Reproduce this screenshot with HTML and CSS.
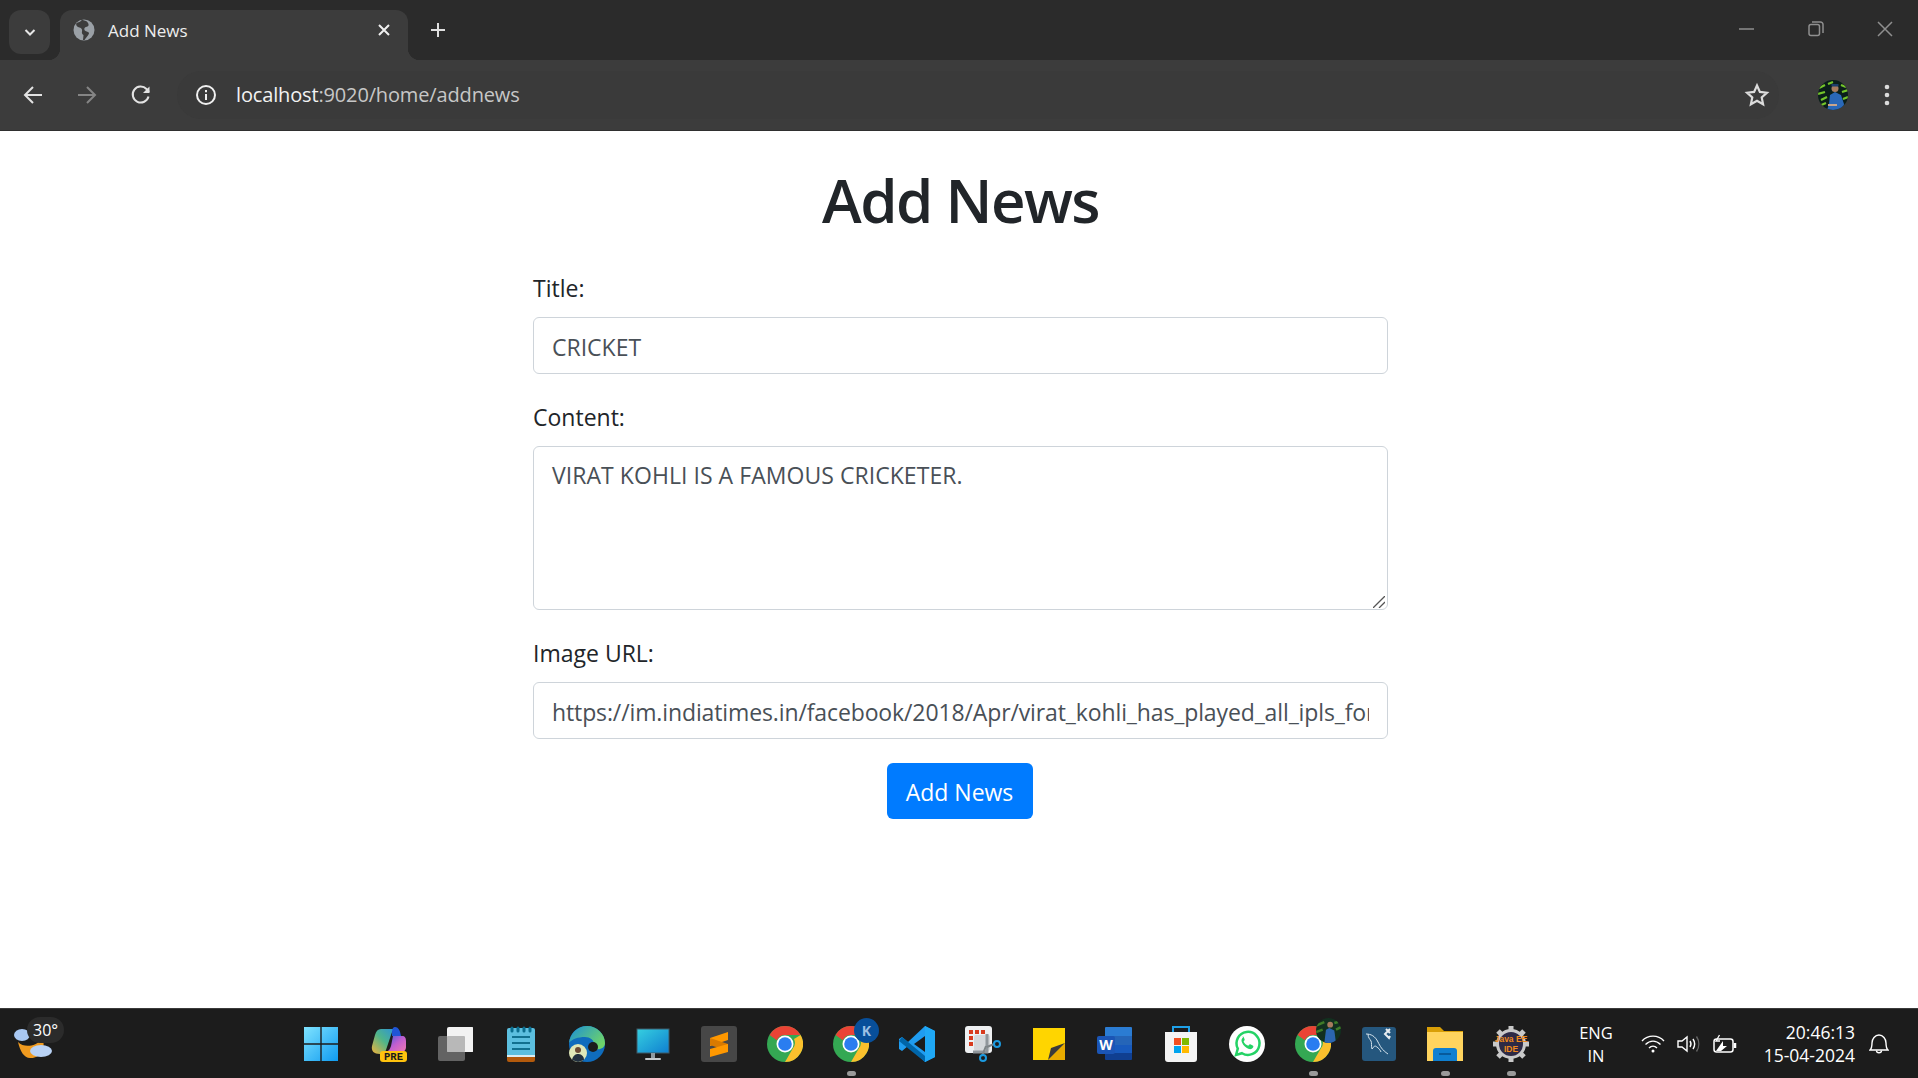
FILE: index.html
```html
<!DOCTYPE html>
<html lang="en">
<head>
  <meta charset="UTF-8">
  <title>Add News</title>
  <link rel="stylesheet" href="styles.css">
</head>
<body>
  <!-- browser tab strip -->
  <div class="tabstrip">
    <div class="tabsearch">
      <svg width="14" height="14" viewBox="0 0 14 14"><path d="M2.5 5l4.5 4.5L11.500 5" fill="none" stroke="#e6e6e6" stroke-width="2"/></svg>
    </div>
    <div class="tab">
      <svg class="globe" width="22" height="22" viewBox="0 0 22 22">
        <circle cx="11" cy="11" r="10.500" fill="#9aa0a6"/>
        <path d="M9 .8C8 3 5 3.500 3.500 4 2.500 6 4 8 6.500 8.500 8.500 9 9.500 10.500 9 12.500c-.5 1.500.5 3 1.500 3.500l-.5 5h1.500c1-2 4-4.500 4.500-6.500.3-1.500-2-2-3.500-2.500-1.500-.7-1.500-2.500-.5-3.500 1-.8 3-.5 3.500-2 .3-1.500-.5-3-2-4.200z" fill="#3c3c3c"/>
      </svg>
      <span class="tab-title">Add News</span>
      <svg class="tab-close" width="14" height="14" viewBox="0 0 14 14"><path d="M2 2l10 10M12 2L2 12" stroke="#f0f0f0" stroke-width="2"/></svg>
    </div>
    <svg class="newtab" width="18" height="18" viewBox="0 0 18 18"><path d="M9 2v14M2 9h14" stroke="#e0e0e0" stroke-width="2"/></svg>
    <div class="winctrls">
      <svg width="16" height="16" viewBox="0 0 16 16"><path d="M0 8h15" stroke="#8f8f8f" stroke-width="1.500"/></svg>
      <svg width="16" height="16" viewBox="0 0 16 16" fill="none" stroke="#8f8f8f" stroke-width="1.500"><rect x="1" y="3.500" width="10.500" height="11" rx="2"/><path d="M4 1h8.500a2.500 2.500 0 0 1 2.500 2.500V12"/></svg>
      <svg width="16" height="16" viewBox="0 0 16 16"><path d="M1 1l14 14M15 1L1 15" stroke="#8f8f8f" stroke-width="1.500"/></svg>
    </div>
  </div>

  <!-- toolbar -->
  <div class="toolbar">
    <svg class="nav-btn" width="22" height="22" viewBox="0 0 22 22" fill="none" stroke="#e3e3e3" stroke-width="2"><path d="M20 11H3M11 3l-8 8 8 8"/></svg>
    <svg class="nav-btn" width="22" height="22" viewBox="0 0 22 22" fill="none" stroke="#858585" stroke-width="2"><path d="M2 11h17M11 3l8 8-8 8"/></svg>
    <svg class="nav-btn" width="22" height="22" viewBox="0 0 22 22" fill="none" stroke="#e3e3e3" stroke-width="2"><path d="M18.500 12.500A8 8 0 1 1 16.500 5L19 8"/><path d="M19.500 2.500V9H13" fill="#e3e3e3" stroke="none"/></svg>
    <div class="omnibox">
      <svg width="22" height="22" viewBox="0 0 22 22" fill="none" stroke="#f0f0f0" stroke-width="2"><circle cx="11" cy="11" r="9"/><path d="M11 10v6M11 6v2.200"/></svg>
      <span class="url"><span class="url-host">localhost</span>:9020/home/addnews</span>
      <svg class="star" width="26" height="26" viewBox="0 0 26 26"><path d="M13 3.500l2.900 6.400 7 .8-5.200 4.700 1.400 6.900-6.100-3.500-6.100 3.500 1.400-6.900-5.200-4.700 7-.8z" fill="none" stroke="#dcdcdc" stroke-width="2.200"/></svg>
    </div>
    <svg class="profile" width="30" height="30" viewBox="0 0 30 30">
      <clipPath id="clipA"><circle cx="15" cy="15" r="15"/></clipPath>
      <g clip-path="url(#clipA)">
        <rect width="30" height="30" fill="#0b1f1a"/>
        <path d="M1 8l6-3M10 4l5-2M0 14l7-2M3 20l6-3M1 26l7-3M23 5l5 2M24 12l6-2M25 19l5-2" stroke="#74c42a" stroke-width="2.200"/>
        <path d="M9 30l2-6 1-9 5-3 6 3 3 9-1 6z" fill="#2a68b8"/>
        <circle cx="17" cy="8.500" r="3.500" fill="#a87b5e"/>
        <path d="M13.500 6.500h7v-2.500h-7z" fill="#1d3f6a"/>
        <path d="M10 25h9" stroke="#c9a58c" stroke-width="2"/>
      </g>
    </svg>
    <svg class="menu-dots" width="6" height="22" viewBox="0 0 6 22"><circle cx="3" cy="3" r="2.300" fill="#dcdcdc"/><circle cx="3" cy="11" r="2.300" fill="#dcdcdc"/><circle cx="3" cy="19" r="2.300" fill="#dcdcdc"/></svg>
  </div>

  <!-- page -->
  <main class="page">
    <div class="container">
      <h1>Add News</h1>
      <form>
        <div class="form-group">
          <label for="title">Title:</label>
          <input type="text" id="title" class="form-control" value="CRICKET">
        </div>
        <div class="form-group">
          <label for="content">Content:</label>
          <div class="area-wrap">
            <textarea id="content" class="form-control area">VIRAT KOHLI IS A FAMOUS CRICKETER.</textarea>
            <svg class="grip" width="12" height="12" viewBox="0 0 12 12"><path d="M0 12L12 0M6 12l6-6" stroke="#555" stroke-width="1.300"/></svg>
          </div>
        </div>
        <div class="form-group">
          <label for="image">Image URL:</label>
          <input type="text" id="image" class="form-control url-field" value="https://im.indiatimes.in/facebook/2018/Apr/virat_kohli_has_played_all_ipls_for_rcb_1523271188_800x420.jpg">
        </div>
        <div class="actions">
          <button type="button" class="btn">Add News</button>
        </div>
      </form>
    </div>
  </main>

  <!-- windows taskbar -->
  <footer class="taskbar">
    <div class="weather">
      <svg width="42" height="42" viewBox="0 0 42 42">
        <ellipse cx="9" cy="14" rx="8" ry="6" fill="#a9c8f2"/>
        <path d="M5 21c6 6 17 5 24-3 5 8-2 20-12 19-6 0-10-7-12-16z" fill="#ef9a1f"/>
        <ellipse cx="28" cy="30" rx="11" ry="6" fill="#b9d2f5"/>
      </svg>
      <span class="temp">30°</span>
    </div>

    <div class="apps">
      <!-- start -->
      <div class="app start">
        <svg width="36" height="36" viewBox="0 0 36 36">
          <defs><linearGradient id="win" x1="0" y1="0" x2="1" y2="1"><stop offset="0" stop-color="#7fe3ff"/><stop offset="1" stop-color="#0f9bf0"/></linearGradient></defs>
          <path d="M1 1h16.300v16.300H1zM18.700 1H35v16.300H18.700zM1 18.700h16.300V35H1zM18.700 18.700H35V35H18.700z" fill="url(#win)"/>
        </svg>
      </div>
      <!-- copilot -->
      <div class="app">
        <svg width="36" height="36" viewBox="0 0 36 36">
          <defs>
            <linearGradient id="copA" x1="0" y1="1" x2="1" y2="0"><stop offset="0" stop-color="#f4b43a"/><stop offset=".5" stop-color="#4fb58a"/><stop offset="1" stop-color="#2a8fe0"/></linearGradient>
            <linearGradient id="copB" x1="0" y1="0" x2="1" y2="1"><stop offset="0" stop-color="#3b5fe0"/><stop offset=".5" stop-color="#c25fd0"/><stop offset="1" stop-color="#f07ab0"/></linearGradient>
          </defs>
          <path d="M10 3h16c-4 0-5 3-6 6l-5 15c-1 3-3 4-6 4-6 0-9-3-8-8l3-11c1-4 3-6 6-6z" fill="url(#copA)"/>
          <path d="M24 1c3 0 5 3 6 9h-9c0-5 0-9 3-9z" fill="#1f55d6"/>
          <path d="M22 10h9c3 0 4 2 4 5v6c0 3-2 5-5 5H15c3-1 4-3 5-6z" fill="url(#copB)"/>
          <rect x="9" y="25" width="27" height="11" rx="3" fill="#ffc30e"/>
          <text x="22.500" y="34" class="ico-pre" text-anchor="middle">PRE</text>
        </svg>
      </div>
      <!-- task view -->
      <div class="app">
        <svg width="36" height="36" viewBox="0 0 36 36">
          <rect x="1" y="10" width="27" height="25" rx="2" fill="#636363"/>
          <rect x="10" y="1" width="27" height="25" rx="2" fill="#f2f2f2"/>
          <rect x="10" y="10" width="18" height="16" rx="1" fill="#b8b8b8"/>
        </svg>
      </div>
      <!-- notepad -->
      <div class="app">
        <svg width="36" height="36" viewBox="0 0 36 36">
          <rect x="4" y="2" width="28" height="31" rx="2" fill="#5cbfdf"/>
          <path d="M4 30h28v4a2 2 0 0 1-2 2H6a2 2 0 0 1-2-2z" fill="#b35a0c"/>
          <path d="M4 29h28v2H4z" fill="#d9eef5"/>
          <path d="M9 2v3M15 2v3M21 2v3M27 2v3" stroke="#0b6e8f" stroke-width="3" stroke-linecap="round"/>
          <path d="M9 11h18M9 17h18M9 23h18" stroke="#11708f" stroke-width="2"/>
        </svg>
      </div>
      <!-- edge -->
      <div class="app">
        <svg width="36" height="36" viewBox="0 0 36 36">
          <defs><linearGradient id="edg" x1="0" y1="0" x2="1" y2=".6"><stop offset="0" stop-color="#1a8fd8"/><stop offset="1" stop-color="#6ed36a"/></linearGradient></defs>
          <circle cx="18" cy="18" r="18" fill="#0f6cbd"/>
          <path d="M0 17C1 7 9 0 18 0c10 0 18 8 18 17 0 5-5 7-9 6-3-1-3-3-2-5 0-4-4-7-9-7-7 0-13 2-16 6z" fill="url(#edg)"/>
          <circle cx="24" cy="21" r="5" fill="#1c1c1c"/>
          <circle cx="9" cy="27" r="9" fill="#dfe7b8"/>
          <path d="M3 34c1-5 4-6 6-6s6 1 6 6l-6 2z" fill="#22303f"/>
          <circle cx="9" cy="24" r="3" fill="#6b4a35"/>
        </svg>
      </div>
      <!-- this pc -->
      <div class="app">
        <svg width="36" height="36" viewBox="0 0 36 36">
          <defs><linearGradient id="pc" x1="0" y1="0" x2="1" y2="1"><stop offset="0" stop-color="#35cfe0"/><stop offset="1" stop-color="#0f7fd0"/></linearGradient></defs>
          <rect x="2" y="3" width="32" height="24" fill="url(#pc)" stroke="#3d5a68"/>
          <rect x="16" y="27" width="4" height="5" fill="#8f9aa0"/>
          <rect x="10" y="32" width="16" height="2" rx="1" fill="#c4c9cc"/>
        </svg>
      </div>
      <!-- sublime -->
      <div class="app">
        <svg width="36" height="36" viewBox="0 0 36 36">
          <rect width="36" height="36" rx="3" fill="#474747"/>
          <path d="M27 6v8L9 20v-8z" fill="#ff9800"/>
          <path d="M9 12l18 6v7L9 19z" fill="#d97a00"/>
          <path d="M27 18v8L9 31v-8z" fill="#ff9800"/>
        </svg>
      </div>
      <!-- chrome -->
      <div class="app">
        <svg width="36" height="36" viewBox="0 0 36 36"><use href="#chrome-logo"/></svg>
      </div>
      <!-- chrome profile K -->
      <div class="app running">
        <svg width="36" height="36" viewBox="0 0 36 36"><use href="#chrome-logo"/></svg>
        <svg class="badge" width="25" height="25" viewBox="0 0 25 25">
          <circle cx="12.500" cy="12.500" r="12.500" fill="#084f9a"/>
          <text x="12.500" y="17.500" class="ico-k" text-anchor="middle">K</text>
        </svg>
      </div>
      <!-- vs code -->
      <div class="app">
        <svg width="36" height="36" viewBox="0 0 36 36">
          <path d="M26 0l10 5v26l-10 5L9 20l-6 5-3-2v-10l3-2 6 5z" fill="#1f9cf0"/>
          <path d="M26 0v36l10-5V5z" fill="#1fa8f5"/>
          <path d="M26 10L15 18l11 8z" fill="#1c1c1c"/>
          <path d="M3 11l23 19v6L0 15z" fill="#0065a9"/>
        </svg>
      </div>
      <!-- snipping tool -->
      <div class="app">
        <svg width="36" height="36" viewBox="0 0 36 36">
          <rect x="0" y="0" width="27" height="27" rx="3" fill="#eef0f2"/>
          <path d="M4 4h4v4H4zM10 4h4v4h-4zM16 4h4v4h-4zM4 10h4v4H4zM4 16h4v4H4z" fill="#d83b1f"/>
          <rect x="9" y="9" width="16" height="16" rx="2" fill="#d4d8dc"/>
          <path d="M22 8v18H8" fill="none" stroke="#8f969c" stroke-width="3"/>
          <path d="M21 20l-4 10M22 21l7-3" stroke="#7d8488" stroke-width="2"/>
          <circle cx="32" cy="18" r="3" fill="none" stroke="#1b9ae0" stroke-width="2"/>
          <circle cx="18" cy="32" r="3" fill="none" stroke="#1b9ae0" stroke-width="2"/>
        </svg>
      </div>
      <!-- sticky notes -->
      <div class="app">
        <svg width="36" height="36" viewBox="0 0 36 36">
          <rect x="2" y="2" width="32" height="32" fill="#ffd500"/>
          <path d="M17 34L34 17v17z" fill="#e8ab00"/>
          <path d="M17 34l3-12 14-5z" fill="#3a3a3a"/>
        </svg>
      </div>
      <!-- word -->
      <div class="app">
        <svg width="36" height="36" viewBox="0 0 36 36">
          <path d="M9 1h25a1 1 0 0 1 1 1v8H8V2a1 1 0 0 1 1-1z" fill="#2b7cd3"/>
          <rect x="8" y="10" width="27" height="9" fill="#2565b8"/>
          <rect x="8" y="19" width="27" height="8" fill="#185abd"/>
          <path d="M8 27h27v6a1 1 0 0 1-1 1H9a1 1 0 0 1-1-1z" fill="#103f91"/>
          <rect x="0" y="10" width="18" height="18" rx="2" fill="#1b55b5"/>
          <text x="9" y="24" class="ico-w" text-anchor="middle">W</text>
        </svg>
      </div>
      <!-- store -->
      <div class="app">
        <svg width="36" height="36" viewBox="0 0 36 36">
          <path d="M10 6V1h16v5" fill="none" stroke="#1ea0e8" stroke-width="2"/>
          <path d="M2 6h32v27a3 3 0 0 1-3 3H5a3 3 0 0 1-3-3z" fill="#f4f4f4"/>
          <rect x="11" y="12" width="7" height="7" fill="#f25022"/>
          <rect x="19" y="12" width="7" height="7" fill="#7fba00"/>
          <rect x="11" y="20" width="7" height="7" fill="#00a4ef"/>
          <rect x="19" y="20" width="7" height="7" fill="#ffb900"/>
        </svg>
      </div>
      <!-- whatsapp -->
      <div class="app">
        <svg width="36" height="36" viewBox="0 0 36 36">
          <circle cx="18" cy="18" r="18" fill="#fff"/>
          <path d="M7 29l1.800-6.300A11.500 11.500 0 1 1 13 27.200z" fill="none" stroke="#25d366" stroke-width="2.500"/>
          <path d="M14 11.500c-1.500 1-2 3-1 5 1.300 3 4 5.500 7 6.500 2 .5 3.800-.5 4.300-2 .2-.8 0-1.200-.6-1.500l-2.400-1.200c-.5-.2-.9 0-1.200.4l-.8 1c-2-.7-3.800-2.300-4.700-4.300l.8-.9c.3-.4.4-.8.200-1.200l-1-2.200c-.2-.5-.6-.6-1.100-.6z" fill="#25d366"/>
        </svg>
      </div>
      <!-- chrome profile photo -->
      <div class="app running">
        <svg width="36" height="36" viewBox="0 0 36 36"><use href="#chrome-logo"/></svg>
        <svg class="badge" width="25" height="25" viewBox="0 0 30 30"><use href="#photo-badge"/></svg>
      </div>
      <!-- mysql workbench -->
      <div class="app">
        <svg width="36" height="36" viewBox="0 0 36 36">
          <rect width="34" height="34" x="1" y="1" rx="3" fill="#25577e"/>
          <path d="M5 8c5 0 9 2 12 8 2 4 4 8 10 12M7 8c0 4 2 5 3 7s0 5 1 8c2-2 2-3 3-3s5 3 6 6" fill="none" stroke="#d5e3ec" stroke-width="1"/>
          <path d="M25 3l4 4M29 3l-5 5 4 4 1-2" fill="none" stroke="#e8eef2" stroke-width="2"/>
        </svg>
      </div>
      <!-- file explorer -->
      <div class="app running">
        <svg width="36" height="36" viewBox="0 0 36 36">
          <path d="M0 1h13l4 4h19v30H0z" fill="#d99f07"/>
          <rect y="6" width="36" height="29" fill="#ffd45e"/>
          <path d="M6 25a3 3 0 0 1 3-3h18a3 3 0 0 1 3 3v10H6z" fill="#0f7fd0"/>
          <path d="M12 28h12" stroke="#075a9c" stroke-width="2"/>
        </svg>
      </div>
      <!-- java ee ide -->
      <div class="app running">
        <svg width="36" height="36" viewBox="0 0 36 36">
          <path d="M18 0v6M18 30v6M0 18h6M30 18h6M5 5l4 4M27 27l4 4M31 5l-4 4M9 27l-4 4" stroke="#c9c9c9" stroke-width="5"/>
          <circle cx="18" cy="18" r="13.500" fill="#2e2a45" stroke="#c9c9c9" stroke-width="3"/>
          <text x="18" y="16" class="ico-ide" text-anchor="middle">Java EE</text>
          <text x="18" y="26" class="ico-ide" text-anchor="middle">IDE</text>
        </svg>
      </div>
    </div>

    <div class="tray">
      <div class="lang">ENG<br>IN</div>
      <svg class="tray-ico" width="24" height="20" viewBox="0 0 24 20" fill="none" stroke="#fff" stroke-width="1.400"><path d="M1 7c6-6.500 16-6.500 22 0M4.500 10.500c4.500-4.500 10.500-4.500 15 0M8 14c2.300-2.300 5.700-2.300 8 0"/><circle cx="12" cy="17" r="1.500" fill="#fff" stroke="none"/></svg>
      <svg class="tray-ico" width="24" height="20" viewBox="0 0 24 20" fill="none" stroke="#fff" stroke-width="1.400"><path d="M1 7v6h4l5 4V3L5 7z"/><path d="M13 7c1.200 1.800 1.200 4.200 0 6M16 5c2 3 2 7 0 10"/><path d="M19.500 2.500c3 4.500 3 10.500 0 15" stroke="#666"/></svg>
      <svg class="tray-ico" width="26" height="20" viewBox="0 0 26 20" fill="none" stroke="#fff" stroke-width="1.500"><rect x="1" y="5" width="19" height="13" rx="2.500"/><path d="M22 9v5" stroke-width="2.500"/><path d="M3 17l7-10v5h4L8 17z" fill="#fff" stroke="none"/><path d="M6.500 1L3 7h4" stroke-width="1.300"/></svg>
      <div class="clock">20:46:13<br>15-04-2024</div>
      <svg class="bell" width="20" height="22" viewBox="0 0 20 22" fill="none" stroke="#fff" stroke-width="1.400"><path d="M1 17c2-2 2-4 2-7 0-4 3-8 7-8s7 4 7 8c0 3 0 5 2 7z"/><path d="M7.500 17.500c0 3 5 3 5 0"/></svg>
    </div>
  </footer>

  <!-- shared icon shapes -->
  <svg class="defs" width="0" height="0">
    <defs>
      <g id="chrome-logo">
        <circle cx="18" cy="18" r="18" fill="#34a853"/>
        <path d="M18 0a18 18 0 0 1 15.600 9H18a9 9 0 0 0-8.200 5.200L2.600 8.900A18 18 0 0 1 18 0z" fill="#ea4335"/>
        <path d="M33.600 9A18 18 0 0 1 18 36l7.800-13.500A9 9 0 0 0 27 13z" fill="#fbc02d"/>
        <circle cx="18" cy="18" r="8.500" fill="#fff"/>
        <circle cx="18" cy="18" r="6.800" fill="#2a7df0"/>
      </g>
      <g id="photo-badge">
        <clipPath id="clipB"><circle cx="15" cy="15" r="15"/></clipPath>
        <g clip-path="url(#clipB)">
          <rect width="30" height="30" fill="#12301f"/>
          <path d="M0 9l10-4M0 17l8-3M22 6l8-2M24 14l6-3" stroke="#3f7d28" stroke-width="3"/>
          <path d="M10 30l2-16 4-2 6 3 2 15z" fill="#2b66b0"/>
          <circle cx="17" cy="8" r="3.500" fill="#a87b5e"/>
        </g>
      </g>
    </defs>
  </svg>
</body>
</html>
```

FILE: styles.css
```css
* {
  box-sizing: border-box;
}
html, body {
  height: 100%;
}
body {
  margin: 0;
  display: flex;
  flex-direction: column;
  font-family: "Open Sans", "Noto Sans", sans-serif;
  background-color: #fff;
  overflow: hidden;
}

/* tab strip */
.tabstrip {
  height: 60px;
  flex: none;
  display: flex;
  align-items: flex-start;
  background-color: #2b2b2b;
  padding: 10px 0 0 9px;
}
.tabsearch {
  width: 41px;
  height: 44px;
  border-radius: 12px;
  background-color: #3c3c3c;
  display: flex;
  align-items: center;
  justify-content: center;
}
.tab {
  width: 348px;
  height: 50px;
  margin-left: 10px;
  padding: 0 17px 10px 13px;
  display: flex;
  align-items: center;
  background-color: #3c3c3c;
  border-radius: 12px 12px 0 0;
  color: #eee;
  position: relative;
}
.tab::before, .tab::after {
  content: "";
  position: absolute;
  bottom: 0;
  width: 12px;
  height: 12px;
}
.tab::before {
  left: -12px;
  background: radial-gradient(circle at 0 0, #2b2b2b 12px, #3c3c3c 12.500px);
}
.tab::after {
  right: -12px;
  background: radial-gradient(circle at 100% 0, #2b2b2b 12px, #3c3c3c 12.500px);
}
.tab-title {
  margin-left: 13px;
  font-size: 17px;
  flex: 1;
}
.newtab {
  margin: 11px 0 0 21px;
}
.winctrls {
  margin-left: auto;
  margin-right: 25px;
  margin-top: 1px;
  height: 36px;
  display: flex;
  align-items: center;
  gap: 53px;
}

/* toolbar */
.toolbar {
  height: 71px;
  flex: none;
  display: flex;
  align-items: center;
  background-color: #3c3c3c;
  border-bottom: 1px solid #2f2f2f;
  padding: 0 28px 0 22px;
}
.nav-btn {
  margin-right: 32px;
}
.omnibox {
  flex: 1;
  height: 48px;
  margin-left: -7px;
  padding: 0 18px 0 18px;
  border-radius: 24px;
  display: flex;
  align-items: center;
  background-color: #3a3a3a;
}
.url {
  margin-left: 19px;
  font-size: 20px;
  letter-spacing: -0.15px;
  line-height: 26px;
  margin-bottom: 1px;
  color: #c7c7c7;
  flex: 1;
}
.url-host {
  color: #f2f2f2;
}
.star {
  margin-right: -9px;
}
.profile {
  margin-left: 39px;
}
.menu-dots {
  margin-left: 36px;
}

/* page */
.page {
  flex: 1;
  min-height: 0;
  padding-top: 33px;
}
.container {
  width: 855px;
  margin-left: 533px;
}
h1 {
  margin: 0 0 33px;
  font-size: 60px;
  font-weight: 600;
  line-height: 1.2;
  letter-spacing: -1.6px;
  text-align: center;
  color: #212529;
}
.form-group {
  margin-bottom: 24px;
}
label {
  display: block;
  margin-bottom: 10px;
  font-size: 23px;
  line-height: 38px;
  color: #212529;
}
.form-control {
  display: block;
  width: 100%;
  height: 57px;
  padding: 10px 18px 8px;
  font-family: inherit;
  font-size: 23px;
  line-height: 36px;
  color: #495057;
  background-color: #fff;
  border: 1px solid #ced4da;
  border-radius: 6px;
}
.area-wrap {
  position: relative;
}
.area {
  height: 164px;
  resize: none;
  letter-spacing: 0.05px;
}
.grip {
  position: absolute;
  right: 3px;
  bottom: 2px;
}
.url-field {
  letter-spacing: -0.12px;
}
.actions {
  text-align: center;
  padding-right: 2px;
}
.btn {
  width: 146px;
  height: 56px;
  padding-top: 2px;
  font-family: inherit;
  font-size: 23px;
  color: #fff;
  background-color: #007bff;
  border: 0;
  border-radius: 6px;
}

/* taskbar */
.taskbar {
  height: 70px;
  flex: none;
  display: flex;
  align-items: center;
  background-color: #1c1c1c;
  border-top: 1px solid #3a3a3a;
  position: relative;
  color: #fff;
}
.weather {
  width: 288px;
  flex: none;
  height: 100%;
  padding: 12px 0 0 13px;
  position: relative;
}
.temp {
  position: absolute;
  left: 27px;
  top: 8px;
  padding: 0 6px;
  border-radius: 14px;
  background-color: #2b2b2b;
  font-size: 16px;
  line-height: 26px;
}
.apps {
  display: flex;
  flex: none;
}
.app {
  width: 66px;
  height: 69px;
  display: flex;
  align-items: center;
  justify-content: center;
  position: relative;
}
.start {
  margin-right: 2px;
}
.running::after {
  content: "";
  position: absolute;
  bottom: 2px;
  left: 29px;
  width: 9px;
  height: 5px;
  border-radius: 3px;
  background-color: #9a9a9a;
}
.badge {
  position: absolute;
  top: 9px;
  left: 36px;
}
.ico-pre {
  font-family: "Liberation Mono", monospace;
  font-size: 10.500px;
  font-weight: 700;
  fill: #1c1c1c;
}
.ico-k {
  font-family: "Open Sans", sans-serif;
  font-size: 14px;
  font-weight: 700;
  fill: #9cc0e4;
}
.ico-w {
  font-family: "Open Sans", sans-serif;
  font-size: 14px;
  font-weight: 700;
  fill: #fff;
}
.ico-ide {
  font-family: "Liberation Sans", sans-serif;
  font-size: 8.500px;
  font-weight: 700;
  fill: #f08a1c;
}
.tray {
  flex: 1;
  display: flex;
  align-items: center;
  height: 100%;
}
.lang {
  margin-left: 30px;
  width: 44px;
  font-size: 16.500px;
  line-height: 23px;
  text-align: center;
}
.tray-ico {
  margin-left: 12px;
}
.tray-ico:first-of-type {
  margin-left: 23px;
}
.clock {
  margin-left: auto;
  font-size: 17.500px;
  line-height: 23px;
  text-align: right;
}
.bell {
  margin: 0 29px 0 14px;
}
.defs {
  position: absolute;
}
```
